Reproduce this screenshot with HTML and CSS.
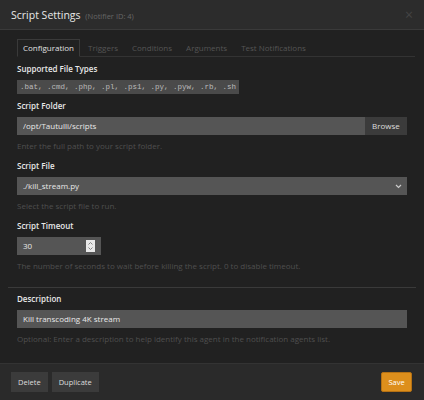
FILE: index.html
```html
<!DOCTYPE html>
<html lang="en">
  <head>
    <meta charset="UTF-8" />
    <meta name="viewport" content="width=device-width, initial-scale=1.0" />
    <title>Script Settings</title>
    <link rel="stylesheet" href="styles.css">
  </head>
  <body>
    <div class="modal">
      <div class="modal-header">
        <h4 class="modal-title">Script Settings <small>(Notifier ID: 4)</small></h4>
        <span class="close">&times;</span>
      </div>

      <div class="modal-body">
        <ul class="tabs">
          <li class="active">Configuration</li>
          <li>Triggers</li>
          <li>Conditions</li>
          <li>Arguments</li>
          <li>Test Notifications</li>
        </ul>

        <div class="tab-content">
          <div class="form-group">
            <label>Supported File Types</label>
            <span class="file-types">.bat, .cmd, .php, .pl, .ps1, .py, .pyw, .rb, .sh</span>
          </div>

          <div class="form-group">
            <label>Script Folder</label>
            <div class="input-group">
              <input class="form-control" type="text" value="/opt/Tautulli/scripts" />
              <button class="btn btn-dark">Browse</button>
            </div>
            <p class="help-block">Enter the full path to your script folder.</p>
          </div>

          <div class="form-group">
            <label>Script File</label>
            <div class="select-wrap">
              <div class="form-control">./kill_stream.py</div>
              <svg class="caret" width="7" height="5" viewBox="0 0 7 5">
                <path d="M1 1 L3.5 3.5 L6 1" fill="none" stroke="#ccc" stroke-width="1.2" />
              </svg>
            </div>
            <p class="help-block">Select the script file to run.</p>
          </div>

          <div class="form-group">
            <label>Script Timeout</label>
            <div class="number-wrap">
              <div class="form-control">30</div>
              <span class="spinner">
                <svg width="9" height="12" viewBox="0 0 9 12">
                  <path d="M2.5 4.5 L4.5 2.5 L6.5 4.5 M2.5 7.5 L4.5 9.5 L6.5 7.5" fill="none" stroke="#777" stroke-width="0.9" />
                </svg>
              </span>
            </div>
            <p class="help-block">The number of seconds to wait before killing the script. 0 to disable timeout.</p>
          </div>
        </div>

        <hr />

        <div class="tab-content">
          <div class="form-group">
            <label>Description</label>
            <input class="form-control" type="text" value="Kill transcoding 4K stream" />
            <p class="help-block">Optional: Enter a description to help identify this agent in the notification agents list.</p>
          </div>
        </div>
      </div>

      <div class="modal-footer">
        <button class="btn btn-dark">Delete</button>
        <button class="btn btn-dark">Duplicate</button>
        <button class="btn btn-bright">Save</button>
      </div>
    </div>
  </body>
</html>
```

FILE: styles.css
```css
body {
  margin: 0;
  padding: 0;
  background-color: #1f1f1f;
  font-family: "Open Sans", "Liberation Sans", sans-serif;
  color: #eee;
}
.modal {
  width: 424px;
  height: 400px;
  display: flex;
  flex-direction: column;
  background-color: #212121;
}
.modal-header {
  height: 29px;
  display: flex;
  align-items: center;
  justify-content: space-between;
  padding: 0 11px;
  background-color: #2c2c2c;
  border-bottom: 1px solid #3a3a3a;
}
.modal-title {
  margin: 0;
  font-size: 10.5px;
  font-weight: 400;
  color: #e8e8e8;
}
.modal-title small {
  font-size: 7.5px;
  color: #666;
  margin-left: 2px;
}
.close {
  font-size: 14px;
  color: #444;
  line-height: 1;
}
.modal-body {
  flex: 1;
  padding: 9px 8px 0;
}
.tabs {
  display: flex;
  list-style: none;
  margin: 0 0 0 9px;
  padding: 0;
  border-bottom: 1px solid #333;
  width: 398px;
}
.tabs li {
  font-size: 8px;
  line-height: 10px;
  color: #555;
  padding: 3px 5px;
  margin-bottom: -1px;
  margin-right: 2px;
  border: 1px solid transparent;
}
.tabs li.active {
  color: #e0e0e0;
  border-color: #3a3a3a;
  border-bottom-color: #212121;
  background-color: #212121;
}
.tab-content {
  padding: 0 9px;
}
.form-group {
  padding-top: 10px;
}
.tabs + .tab-content .form-group:first-child {
  padding-top: 7px;
}
.form-group:nth-child(2) {
  padding-top: 7px;
}
hr + .tab-content .form-group {
  padding-top: 6px;
}
label {
  display: block;
  font-size: 8px;
  line-height: 10px;
  font-weight: 600;
  color: #e8e8e8;
  margin-bottom: 6px;
}
.file-types {
  display: block;
  width: max-content;
  font-family: "Liberation Mono", monospace;
  font-size: 7.5px;
  line-height: 14px;
  height: 14px;
  color: #bbb;
  background-color: #4a4a4a;
  padding: 0 3px;
  margin-top: 2px;
}
.form-control {
  display: block;
  box-sizing: border-box;
  width: 100%;
  height: 18px;
  padding: 0 6px;
  border: none;
  background-color: #555;
  color: #e8e8e8;
  font-family: inherit;
  font-size: 8px;
  line-height: 18px;
}
.input-group {
  display: flex;
}
.input-group .form-control {
  flex: 1;
}
.btn {
  font-family: inherit;
  font-size: 7.5px;
  border: none;
  padding: 0 7px;
  height: 20px;
  color: #ddd;
}
.input-group .btn {
  height: 18px;
  width: 42px;
  padding: 0;
  font-size: 8px;
  line-height: 16px;
}
.btn-dark {
  background-color: #3b3b3b;
}
.btn-bright {
  background-color: #dd8f1c;
  color: #fff;
  border: 1px solid #b57114;
  border-radius: 2px;
  margin-left: auto;
  width: 31px;
  padding: 0;
}
.help-block {
  margin: 6px 0 0;
  font-size: 8px;
  line-height: 10px;
  color: #4f4f4f;
}
.select-wrap {
  display: flex;
  align-items: center;
  background-color: #555;
}
.select-wrap .form-control {
  flex: 1;
}
.select-wrap .caret {
  margin-right: 5px;
}
.number-wrap {
  display: flex;
  align-items: center;
  width: 84px;
  background-color: #555;
}
.number-wrap .form-control {
  flex: 1;
}
.spinner {
  display: flex;
  width: 9px;
  height: 12px;
  background-color: #e8e8e8;
  margin-right: 6px;
}
hr {
  border: none;
  border-top: 1px solid #3a3a3a;
  margin: 16px 0 0;
}
.modal-footer {
  height: 36px;
  display: flex;
  align-items: center;
  gap: 4px;
  padding: 0 12px 0 11px;
  background-color: #2a2a2a;
  border-top: 1px solid #333;
}
```
